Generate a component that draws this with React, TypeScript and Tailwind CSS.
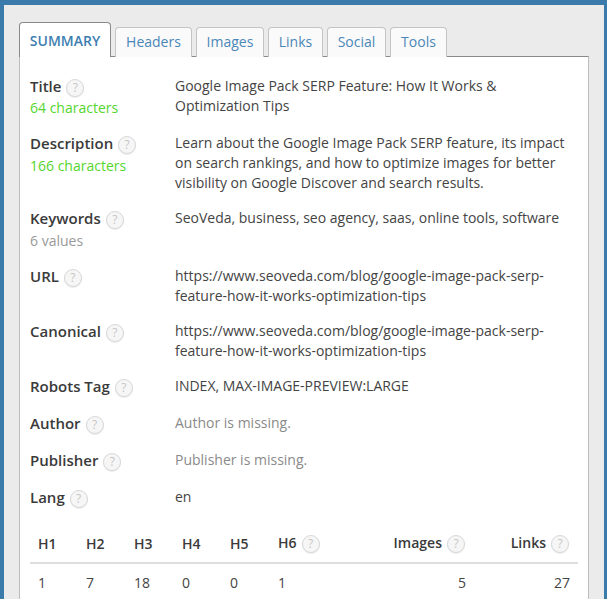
import React from "react";

function Help() {
  return (
    <span className="inline-flex items-center justify-center w-[18px] h-[18px] rounded-full border border-[#d8d8d8] bg-[#f6f6f6] text-[12px] leading-none font-normal text-[#c6c6c6] ml-[5px] mt-[2px] shadow-[0_1px_1px_rgba(0,0,0,0.08)]">
      ?
    </span>
  );
}

function Row({ label, sub, subClass, children, h, valueClass }: { label: string; sub?: string; subClass?: string; children: React.ReactNode; h: string; valueClass?: string }) {
  return (
    <div className={`flex ${h}`}>
      <div className="w-[145px] shrink-0">
        <div className="flex items-center h-[21px] text-[15px] font-semibold text-[#3a3a3a]">
          {label}
          <Help />
        </div>
        {sub && <div className={`leading-[20px] ${subClass}`}>{sub}</div>}
      </div>
      <div className={`flex-1 leading-[20px] ${valueClass ?? "text-[#444]"}`}>{children}</div>
    </div>
  );
}

const tabs = ["Headers", "Images", "Links", "Social", "Tools"];

export default function App() {
  return (
    <div className="w-[607px] h-[599px] overflow-hidden bg-[#ebebeb] border-t-[5px] border-l-[4px] border-r-[3px] border-[#3b7bac] text-[14px] text-[#444]" style={{ fontFamily: '"Open Sans", "Noto Sans", sans-serif' }}>
      <div className="ml-[15px] mr-[15px] pt-[17px]">
        <div className="flex items-end gap-[4px] relative z-10 -mb-[1px]">
          <div className="h-[35px] w-[92px] flex items-center justify-center bg-white border border-[#8a8a8a] border-b-0 rounded-t-[4px] font-semibold text-[#3d7eb0]">SUMMARY</div>
          {tabs.map((t, i) => (
            <div key={t} className={`h-[30px] ${["w-[77px]", "w-[68px]", "w-[55px]", "w-[59px]", "w-[57px]"][i]} flex items-center justify-center bg-[#fafafa] border border-[#c4c4c4] border-b-0 rounded-t-[4px] text-[#4a87b8] pb-[3px]`}>{t}</div>
          ))}
        </div>
        <div className="bg-white border-x border-t border-[#8a8a8a] border-l-[#bdbdbd] border-r-[#bdbdbd] h-[560px] px-[10px] pt-[19px]">
          <Row label="Title" sub="64 characters" subClass="text-[#55d62e] mt-[1px]" h="h-[57px]">
            Google Image Pack SERP Feature: How It Works &<br />Optimization Tips
          </Row>
          <Row label="Description" sub="166 characters" subClass="text-[#55d62e] mt-[2px]" h="h-[75px]">
            Learn about the Google Image Pack SERP feature, its impact<br />on search rankings, and how to optimize images for better<br />visibility on Google Discover and search results.
          </Row>
          <Row label="Keywords" sub="6 values" subClass="text-[#999] mt-[2px]" h="h-[58px]">
            SeoVeda, business, seo agency, saas, online tools, software
          </Row>
          <Row label="URL" h="h-[55px]">
            https://www.seoveda.com/blog/google-image-pack-serp-<br />feature-how-it-works-optimization-tips
          </Row>
          <Row label="Canonical" h="h-[55px]">
            https://www.seoveda.com/blog/google-image-pack-serp-<br />feature-how-it-works-optimization-tips
          </Row>
          <Row label="Robots Tag" h="h-[37px]">INDEX, MAX-IMAGE-PREVIEW:LARGE</Row>
          <Row label="Author" h="h-[37px]" valueClass="text-[#8a8a8a]">Author is missing.</Row>
          <Row label="Publisher" h="h-[37px]" valueClass="text-[#8a8a8a]">Publisher is missing.</Row>
          <Row label="Lang" h="h-[35px]">en</Row>
          <div className="flex items-center h-[40px] border-b-2 border-[#dedede] font-semibold text-[#3a3a3a] pl-[8px] pr-[8px] mt-[2px]">
            <span className="w-[48px]">H1</span>
            <span className="w-[48px]">H2</span>
            <span className="w-[48px]">H3</span>
            <span className="w-[48px]">H4</span>
            <span className="w-[48px]">H5</span>
            <span className="flex items-center w-[60px]"><span className="mb-[2px]">H6</span><Help /></span>
            <span className="w-[127px] flex items-center justify-end"><span className="mb-[2px]">Images</span><Help /></span>
            <span className="flex-1 flex items-center justify-end mr-[1px]"><span className="mb-[2px]">Links</span><Help /></span>
          </div>
          <div className="flex items-center h-[36px] pl-[8px] pr-[8px] text-[#444]">
            <span className="w-[48px]">1</span>
            <span className="w-[48px]">7</span>
            <span className="w-[48px]">18</span>
            <span className="w-[48px]">0</span>
            <span className="w-[48px]">0</span>
            <span className="w-[60px]">1</span>
            <span className="w-[128px] text-right">5</span>
            <span className="flex-1 text-right">27</span>
          </div>
        </div>
      </div>
    </div>
  );
}
